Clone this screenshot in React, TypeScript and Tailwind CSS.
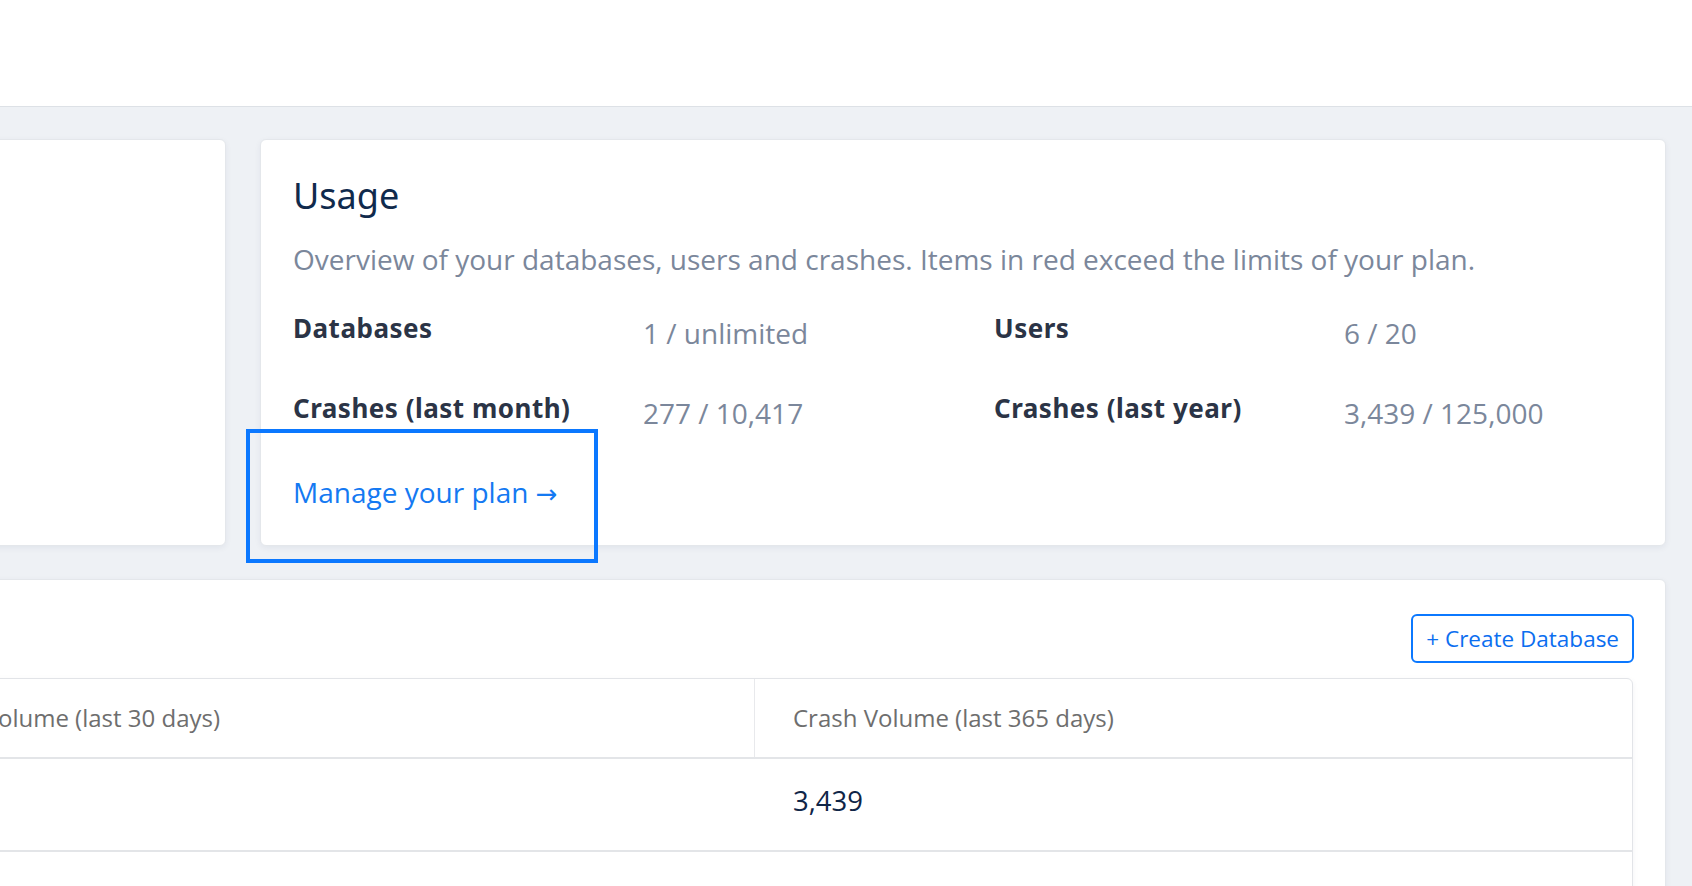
import React from "react";

const body = { fontFamily: '"Open Sans", "Liberation Sans", sans-serif' };
const head = { fontFamily: '"Noto Sans", "Open Sans", sans-serif' };

export default function App() {
  return (
    <div className="w-[1692px] h-[886px] overflow-hidden bg-[#eef1f5]" style={body}>
      <div className="h-[107px] bg-white border-b border-[#dde1e6]" />
      <div className="ml-[-200px] mr-[26px] pt-[32px] flex flex-col gap-[33px]">
        <div className="flex gap-[34px] h-[407px]">
          <div className="w-[426px] shrink-0 bg-white rounded-[6px] border border-[#e4e7eb] shadow-[0_2px_6px_rgba(20,40,80,0.06)]" />
          <div className="relative flex-1 min-w-0 bg-white rounded-[6px] border border-[#e4e7eb] shadow-[0_2px_6px_rgba(20,40,80,0.06)] pl-[32px] pt-[33px]">
            <h2 className="text-[36px] leading-[46px] text-[#102a4c]" style={head}>Usage</h2>
            <p className="mt-[22px] text-[28px] leading-[36px] text-[#7b879b] whitespace-nowrap">
              Overview of your databases, users and crashes. Items in red exceed the limits of your plan.
            </p>
            <div className="mt-[34px] grid grid-cols-[350px_351px_350px_350px] gap-y-[40px]">
              {[
                ["Databases", "1 / unlimited", "Users", "6 / 20"],
                ["Crashes (last month)", "277 / 10,417", "Crashes (last year)", "3,439 / 125,000"],
              ].map((row, i) => (
                <React.Fragment key={i}>
                  <div className="text-[26px] leading-[34px] font-bold tracking-[0.5px] text-[#2b3446] whitespace-nowrap" style={head}>{row[0]}</div>
                  <div className="pt-[4px] text-[28px] leading-[36px] text-[#7b879b] whitespace-nowrap">{row[1]}</div>
                  <div className="text-[26px] leading-[34px] font-bold tracking-[0.5px] text-[#2b3446] whitespace-nowrap" style={head}>{row[2]}</div>
                  <div className="pt-[4px] text-[28px] leading-[36px] text-[#7b879b] whitespace-nowrap">{row[3]}</div>
                </React.Fragment>
              ))}
            </div>
            <a className="mt-[43px] block w-fit text-[28px] leading-[36px] text-[#1479f2] whitespace-nowrap" href="#">
              Manage your plan <span className="text-[26px]" style={{ fontFamily: '"DejaVu Sans", sans-serif' }}>→</span>
            </a>
            <div className="absolute left-[-15px] top-[289px] w-[352px] h-[134px] border-[4px] border-[#0b78ff]" />
          </div>
        </div>
        <div className="bg-white rounded-[6px] border border-[#e4e7eb] shadow-[0_2px_6px_rgba(20,40,80,0.06)] pl-[33px] pr-[31px] pt-[34px] h-[400px]">
          <div className="flex justify-end">
            <button className="h-[49px] px-[13px] rounded-[6px] border-2 border-[#0b78ff] text-[22.5px] text-[#0b6ef0] bg-white">
              + Create Database
            </button>
          </div>
          <div className="mt-[15px] mr-[1px] rounded-t-[6px] border border-[#e2e4e8] shadow-[0_2px_6px_rgba(20,40,80,0.05)]">
            <div className="flex h-[80px] border-b-2 border-[#e3e5e8]">
              <div className="flex-1 flex items-center pl-[78px] text-[24px] text-[#6e6e6e] whitespace-nowrap">
                Crash Volume (last 30 days)
              </div>
              <div className="w-[878px] border-l border-[#e8e9ec] flex items-center pl-[38px] text-[24px] text-[#6e6e6e] whitespace-nowrap">
                Crash Volume (last 365 days)
              </div>
            </div>
            <div className="flex h-[93px] border-b-2 border-[#e3e5e8]">
              <div className="flex-1" />
              <div className="w-[878px] flex items-center pl-[39px] pb-[8px] text-[27.5px] text-[#0f2547]">3,439</div>
            </div>
            <div className="h-[60px]" />
          </div>
        </div>
      </div>
    </div>
  );
}
